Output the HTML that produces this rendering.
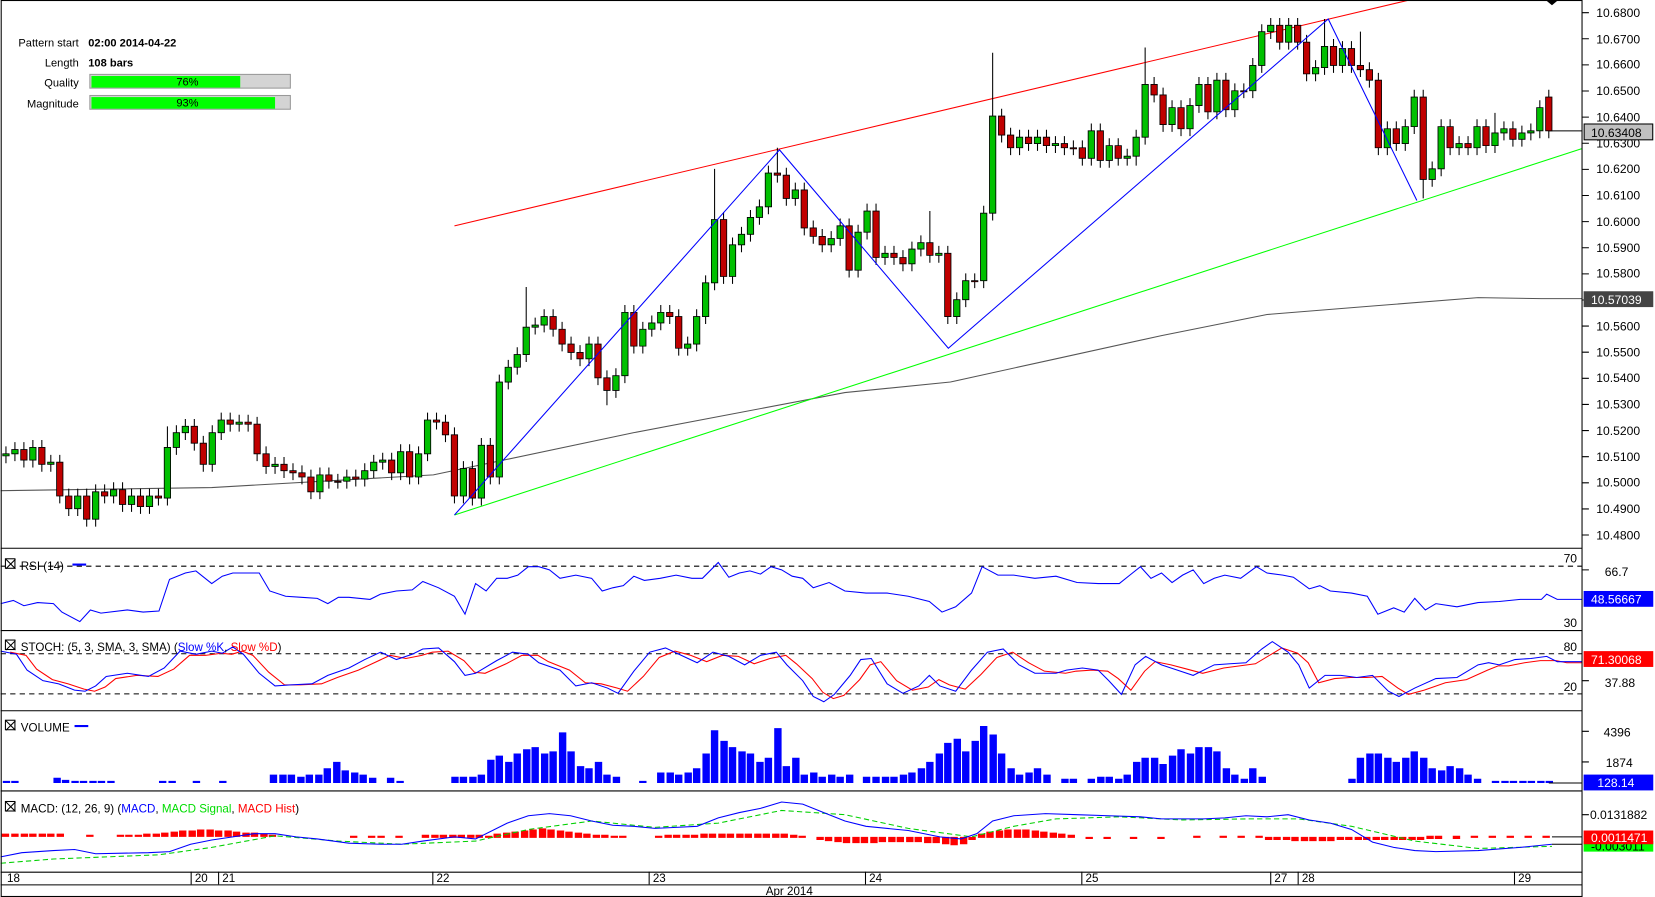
<!DOCTYPE html>
<html><head><meta charset="utf-8"><style>
html,body{margin:0;padding:0;background:#fff;overflow:hidden}
svg{display:block;font-family:"Liberation Sans",sans-serif}
</style></head><body>
<svg width="1655" height="897" viewBox="0 0 1567 850" xmlns="http://www.w3.org/2000/svg">
<rect width="1567" height="850" fill="#fff"/>
<!-- trend lines -->
<polyline points="0,465 200,462 410,450 600,410 800,372 900,362 1000,340 1100,318 1200,298 1300,290 1400,282 1460,283 1498,283" fill="none" stroke="#555"/>
<line x1="430" y1="214" x2="1335" y2="0" stroke="#f00"/>
<line x1="430" y1="488" x2="1498" y2="141" stroke="#0f0"/>
<line x1="1467" y1="124" x2="1498" y2="124" stroke="#000"/>
<!-- wicks -->
<path stroke="#000" fill="none" d="M5 423V439M13.5 419V437M22 419V443M30.5 417V443M39 417V447M47.5 431V447M56 431V477M64.5 463V489M73 463V489M81.5 463V499M90 459V499M98.5 459V477M107 457V477M115.5 457V485M124 463V485M132.5 463V487M141 463V487M149.5 463V479M158 404V479M166.5 403V431M175 397V417M183.5 397V427M192 413V447M200.5 403V447M209 391V417M217.5 391V409M226 393V409M234.5 393V409M243 395V437M251.5 423V449M260 433V449M268.5 433V453M277 439V455M285.5 441V459M294 445V473M302.5 443V473M311 443V463M319.5 449V463M328 445V463M336.5 445V461M345 439V461M353.5 431V453M362 429V445M370.5 429V455M379 421V455M387.5 421V459M396 423V459M404.5 391V437M413 391V407M421.5 393V419M430 405V477M438.5 437V477M447 437V479M455.5 415V479M464 415V459M472.5 355V459M481 341V369M489.5 329V355M498 272V343M506.5 301V317M515 293V315M523.5 293V319M532 305V333M540.5 319V341M549 327V347M557.5 319V347M566 319V365M574.5 351V384M583 349V377M591.5 289V363M600 289V335M608.5 305V335M617 299V319M625.5 289V313M634 289V307M642.5 293V337M651 319V337M659.5 293V333M668 261V307M676.5 160V275M685 201V269M693.5 225V269M702 215V239M710.5 199V229M719 189V213M727.5 157V203M736 140V173M744.5 159V195M753 173V195M761.5 173V223M770 209V231M778.5 217V239M787 219V239M795.5 207V233M804 207V263M812.5 213V263M821 193V227M829.5 193V251M838 233V251M846.5 233V251M855 237V257M863.5 229V257M872 223V243M880.5 200V249M889 233V249M897.5 233V307M906 277V307M914.5 259V291M923 259V273M931.5 195V273M940 50V209M948.5 103V135M957 121V147M965.5 123V147M974 123V143M982.5 123V143M991 123V145M999.5 129V145M1008 129V147M1016.5 133V147M1025 133V157M1033.5 117V157M1042 117V159M1050.5 131V159M1059 131V157M1067.5 141V157M1076 123V157M1084.5 45V137M1093 73V97M1101.5 83V125M1110 95V125M1118.5 95V129M1127 93V129M1135.5 73V107M1144 73V113M1152.5 69V113M1161 69V111M1169.5 79V111M1178 79V93M1186.5 55V93M1195 23V69M1203.5 17V37M1212 17V47M1220.5 17V47M1229 17V47M1237.5 33V77M1246 57V77M1254.5 18V71M1263 37V69M1271.5 39V69M1280 39V69M1288.5 30V73M1297 59V83M1305.5 69V147M1314 115V147M1322.5 115V143M1331 113V143M1339.5 85V127M1348 85V188M1356.5 153V177M1365 113V167M1373.5 113V147M1382 129V147M1390.5 129V147M1399 113V147M1407.5 113V145M1416 107V145M1424.5 115V133M1433 115V139M1441.5 119V139M1450 117V133M1458.5 95V131M1467 85V131"/>
<!-- green bodies -->
<path fill="#00c000" stroke="#000" stroke-width="0.8" d="M2 430h6v2h-6zM10.5 426h6v4h-6zM27.5 424h6v12h-6zM44.5 438h6v2h-6zM70 470h6v12h-6zM87 466h6v26h-6zM104 464h6v6h-6zM121 470h6v8h-6zM138 470h6v10h-6zM155 424h6v48h-6zM163.5 410h6v14h-6zM172 404h6v6h-6zM197.5 410h6v30h-6zM206 398h6v12h-6zM223 400h6v2h-6zM257 440h6v2h-6zM299.5 450h6v16h-6zM325 452h6v4h-6zM342 446h6v8h-6zM350.5 438h6v8h-6zM359 436h6v2h-6zM376 428h6v20h-6zM393 430h6v22h-6zM401.5 398h6v32h-6zM435.5 444h6v26h-6zM452.5 422h6v50h-6zM469.5 362h6v90h-6zM478 348h6v14h-6zM486.5 336h6v12h-6zM495 310h6v26h-6zM503.5 308h6v2h-6zM512 300h6v8h-6zM554.5 326h6v14h-6zM580 356h6v14h-6zM588.5 296h6v60h-6zM605.5 312h6v16h-6zM614 306h6v6h-6zM622.5 296h6v10h-6zM648 326h6v4h-6zM656.5 300h6v26h-6zM665 268h6v32h-6zM673.5 208h6v60h-6zM690.5 232h6v30h-6zM699 222h6v10h-6zM707.5 206h6v16h-6zM716 196h6v10h-6zM724.5 164h6v32h-6zM750 180h6v8h-6zM784 226h6v6h-6zM792.5 214h6v12h-6zM809.5 220h6v36h-6zM818 200h6v20h-6zM835 240h6v4h-6zM860.5 236h6v14h-6zM869 230h6v6h-6zM886 240h6v2h-6zM903 284h6v16h-6zM911.5 266h6v18h-6zM928.5 202h6v64h-6zM937 110h6v92h-6zM962.5 130h6v10h-6zM979.5 130h6v6h-6zM996.5 136h6v2h-6zM1030.5 124h6v26h-6zM1047.5 138h6v14h-6zM1064.5 148h6v2h-6zM1073 130h6v18h-6zM1081.5 80h6v50h-6zM1107 102h6v16h-6zM1124 100h6v22h-6zM1132.5 80h6v20h-6zM1149.5 76h6v30h-6zM1166.5 86h6v18h-6zM1183.5 62h6v24h-6zM1192 30h6v32h-6zM1200.5 24h6v6h-6zM1217.5 24h6v16h-6zM1243 64h6v6h-6zM1251.5 44h6v20h-6zM1268.5 46h6v16h-6zM1311 122h6v18h-6zM1328 120h6v16h-6zM1336.5 92h6v28h-6zM1353.5 160h6v10h-6zM1362 120h6v40h-6zM1379 136h6v4h-6zM1396 120h6v20h-6zM1413 126h6v12h-6zM1421.5 122h6v4h-6zM1438.5 126h6v6h-6zM1447 124h6v2h-6zM1455.5 102h6v22h-6z"/>
<!-- red bodies -->
<path fill="#c00000" stroke="#000" stroke-width="0.8" d="M19 426h6v10h-6zM36 424h6v16h-6zM53 438h6v32h-6zM61.5 470h6v12h-6zM78.5 470h6v22h-6zM95.5 466h6v4h-6zM112.5 464h6v14h-6zM129.5 470h6v10h-6zM146.5 470h6v2h-6zM180.5 404h6v16h-6zM189 420h6v20h-6zM214.5 398h6v4h-6zM231.5 400h6v2h-6zM240 402h6v28h-6zM248.5 430h6v12h-6zM265.5 440h6v6h-6zM274 446h6v2h-6zM282.5 448h6v4h-6zM291 452h6v14h-6zM308 450h6v6h-6zM316.5 456h6v1h-6zM333.5 452h6v2h-6zM367.5 436h6v12h-6zM384.5 428h6v24h-6zM410 398h6v2h-6zM418.5 400h6v12h-6zM427 412h6v58h-6zM444 444h6v28h-6zM461 422h6v30h-6zM520.5 300h6v12h-6zM529 312h6v14h-6zM537.5 326h6v8h-6zM546 334h6v6h-6zM563 326h6v32h-6zM571.5 358h6v12h-6zM597 296h6v32h-6zM631 296h6v4h-6zM639.5 300h6v30h-6zM682 208h6v54h-6zM733 164h6v2h-6zM741.5 166h6v22h-6zM758.5 180h6v36h-6zM767 216h6v8h-6zM775.5 224h6v8h-6zM801 214h6v42h-6zM826.5 200h6v44h-6zM843.5 240h6v4h-6zM852 244h6v6h-6zM877.5 230h6v12h-6zM894.5 240h6v60h-6zM920 266h6v1h-6zM945.5 110h6v18h-6zM954 128h6v12h-6zM971 130h6v6h-6zM988 130h6v8h-6zM1005 136h6v4h-6zM1013.5 140h6v1h-6zM1022 140h6v10h-6zM1039 124h6v28h-6zM1056 138h6v12h-6zM1090 80h6v10h-6zM1098.5 90h6v28h-6zM1115.5 102h6v20h-6zM1141 80h6v26h-6zM1158 76h6v28h-6zM1175 86h6v1h-6zM1209 24h6v16h-6zM1226 24h6v16h-6zM1234.5 40h6v30h-6zM1260 44h6v18h-6zM1277 46h6v16h-6zM1285.5 62h6v4h-6zM1294 66h6v10h-6zM1302.5 76h6v64h-6zM1319.5 122h6v14h-6zM1345 92h6v78h-6zM1370.5 120h6v20h-6zM1387.5 136h6v4h-6zM1404.5 120h6v18h-6zM1430 122h6v10h-6zM1464 92h6v32h-6z"/>
<!-- zigzag -->
<polyline points="430,488 738,142 898,330 1258,18 1342,190" fill="none" stroke="#00f"/>
<!-- indicator levels -->
<g stroke="#000" stroke-dasharray="5,4">
<line x1="0" y1="536.5" x2="1498" y2="536.5"/>
<line x1="0" y1="619.5" x2="1498" y2="619.5"/>
<line x1="0" y1="657.5" x2="1498" y2="657.5"/>
</g>
<!-- RSI -->
<polyline fill="none" stroke="#00f" points="0,572 12,569 22,574 35,571 50,572 58,580 75,589 85,578 95,581 120,578 135,580 150,579 160,549 175,543 185,541 200,553 210,546 220,543 245,543 255,560 270,565 285,566 300,567 310,572 320,566 330,566 350,568 360,563 375,560 390,559 400,551 415,557 430,565 440,582 450,553 460,560 470,548 480,548 490,545 500,537 510,537 520,540 530,548 545,545 560,548 570,560 580,557 590,555 600,546 610,550 625,548 640,545 655,548 665,548 680,533 690,547 700,543 710,541 720,544 730,537 740,540 750,546 760,548 770,557 785,552 800,560 820,562 840,562 860,565 880,570 892,580 905,575 920,562 930,537 945,545 960,545 980,548 1000,546 1020,552 1040,553 1060,553 1070,545 1080,537 1090,548 1100,543 1110,552 1120,545 1130,540 1140,553 1150,548 1160,545 1175,548 1190,537 1200,543 1215,545 1225,547 1240,558 1250,555 1260,560 1280,562 1295,565 1305,582 1320,576 1330,580 1340,567 1350,578 1360,572 1380,575 1400,571 1420,570 1440,568 1460,568 1465,563 1475,568 1498,568"/>
<!-- STOCH -->
<polyline fill="none" stroke="#f00" transform="translate(9,1)" points="0,617 15,620 25,633 40,643 55,647 70,652 80,654 90,650 100,642 120,639 140,640 155,633 170,620 185,620 200,618 210,619 220,616 230,620 245,636 260,648 275,648 295,647 310,641 330,634 345,627 360,620 375,623 390,620 400,617 415,616 430,625 440,636 450,637 470,628 485,620 500,620 510,626 530,634 545,646 560,647 575,651 585,654 600,640 615,622 630,616 645,620 660,626 675,620 690,621 705,628 720,623 735,620 745,628 760,642 770,655 780,661 790,658 805,643 815,629 825,626 840,644 855,653 870,650 880,643 890,648 905,652 920,638 935,622 950,617 965,627 980,635 1000,637 1010,635 1025,634 1040,635 1050,642 1062,653 1075,635 1085,626 1100,629 1115,633 1130,637 1150,632 1165,630 1180,628 1195,619 1205,613 1220,618 1230,627 1240,646 1255,642 1270,641 1285,641 1300,640 1315,651 1325,657 1340,653 1360,646 1380,643 1400,634 1410,630 1420,630 1435,627 1450,625 1465,625 1475,627 1489,627"/>
<polyline fill="none" stroke="#00f" points="0,617 15,620 25,635 40,645 55,648 70,654 80,655 90,650 100,641 120,638 140,641 155,633 170,617 185,620 200,617 210,619 220,613 230,620 245,638 260,650 275,649 295,648 310,640 330,633 345,625 360,618 375,625 390,620 400,615 415,614 430,627 440,640 450,638 470,626 485,618 500,620 510,628 530,635 545,650 560,647 575,652 585,657 600,636 615,618 630,614 645,621 660,628 675,618 690,622 705,630 720,621 735,618 745,630 760,645 770,660 780,665 790,658 805,640 815,625 825,624 840,648 855,657 870,650 880,640 890,650 905,655 920,635 935,618 950,615 965,630 980,638 1000,638 1010,635 1025,633 1040,635 1050,645 1062,658 1075,630 1085,622 1100,630 1115,635 1130,640 1150,630 1165,629 1180,628 1195,615 1205,608 1220,618 1230,630 1240,652 1255,640 1270,640 1285,642 1300,640 1315,655 1325,660 1340,652 1360,643 1380,642 1400,630 1410,628 1420,630 1435,625 1450,624 1465,622 1475,627 1498,627"/>
<!-- VOLUME -->
<path fill="#00f" d="M2 740h7v2h-7zM10 740h7v2h-7zM50 737h7v5h-7zM58 739h7v3h-7zM67 740h7v2h-7zM75 740h7v2h-7zM84 740h7v2h-7zM92 740h7v2h-7zM101 740h7v2h-7zM150 740h7v2h-7zM159 740h7v2h-7zM182 740h7v2h-7zM207 740h7v2h-7zM255 734h7v8h-7zM264 734h7v8h-7zM272 734h7v8h-7zM281 736h7v6h-7zM289 734h7v8h-7zM298 734h7v8h-7zM306 728h7v14h-7zM315 722h7v20h-7zM323 730h7v12h-7zM332 732h7v10h-7zM340 734h7v8h-7zM349 737h7v5h-7zM366 737h7v5h-7zM375 740h7v2h-7zM427 736h7v6h-7zM435 736h7v6h-7zM444 736h7v6h-7zM452 734h7v8h-7zM461 720h7v22h-7zM469 716h7v26h-7zM478 722h7v20h-7zM486 714h7v28h-7zM495 710h7v32h-7zM503 708h7v34h-7zM512 714h7v28h-7zM520 712h7v30h-7zM529 694h7v48h-7zM537 712h7v30h-7zM546 726h7v16h-7zM554 728h7v14h-7zM563 722h7v20h-7zM571 734h7v8h-7zM580 736h7v6h-7zM605 740h7v2h-7zM622 732h7v10h-7zM631 732h7v10h-7zM639 734h7v8h-7zM648 732h7v10h-7zM656 728h7v14h-7zM665 714h7v28h-7zM673 692h7v50h-7zM682 702h7v40h-7zM690 708h7v34h-7zM699 712h7v30h-7zM707 714h7v28h-7zM716 722h7v20h-7zM724 718h7v24h-7zM733 690h7v52h-7zM741 726h7v16h-7zM750 718h7v24h-7zM758 734h7v8h-7zM767 732h7v10h-7zM775 736h7v6h-7zM784 734h7v8h-7zM792 736h7v6h-7zM801 734h7v8h-7zM817 736h7v6h-7zM826 736h7v6h-7zM835 736h7v6h-7zM843 736h7v6h-7zM852 734h7v8h-7zM860 732h7v10h-7zM869 728h7v14h-7zM877 722h7v20h-7zM886 714h7v28h-7zM894 704h7v38h-7zM903 700h7v42h-7zM911 712h7v30h-7zM920 702h7v40h-7zM928 688h7v54h-7zM937 696h7v46h-7zM945 714h7v28h-7zM954 728h7v14h-7zM962 734h7v8h-7zM971 732h7v10h-7zM979 728h7v14h-7zM988 734h7v8h-7zM1005 738h7v4h-7zM1013 738h7v4h-7zM1030 738h7v4h-7zM1039 736h7v6h-7zM1047 736h7v6h-7zM1056 738h7v4h-7zM1064 734h7v8h-7zM1073 722h7v20h-7zM1081 718h7v24h-7zM1090 718h7v24h-7zM1098 724h7v18h-7zM1107 716h7v26h-7zM1115 710h7v32h-7zM1124 714h7v28h-7zM1132 708h7v34h-7zM1141 708h7v34h-7zM1149 712h7v30h-7zM1158 728h7v14h-7zM1166 734h7v8h-7zM1175 738h7v4h-7zM1183 728h7v14h-7zM1192 736h7v6h-7zM1277 738h7v4h-7zM1285 718h7v24h-7zM1294 714h7v28h-7zM1302 714h7v28h-7zM1311 718h7v24h-7zM1319 722h7v20h-7zM1328 718h7v24h-7zM1336 712h7v30h-7zM1345 718h7v24h-7zM1353 728h7v14h-7zM1362 730h7v12h-7zM1370 726h7v16h-7zM1379 728h7v14h-7zM1387 734h7v8h-7zM1396 738h7v4h-7zM1413 740h7v2h-7zM1422 740h7v2h-7zM1430 740h7v2h-7zM1439 740h7v2h-7zM1447 740h7v2h-7zM1456 740h7v2h-7zM1464 740h7v2h-7z"/>
<line x1="1467" y1="742" x2="1498" y2="742" stroke="#000"/>
<!-- MACD -->
<path fill="#f00" d="M1 790h7v3h-7zM10 790h7v3h-7zM19 790h7v3h-7zM27 790h7v3h-7zM36 790h7v3h-7zM44 790h7v3h-7zM53 790h7v3h-7zM81 791h7v2h-7zM110 791h7v2h-7zM118 791h7v2h-7zM127 791h7v2h-7zM135 790h7v3h-7zM144 790h7v3h-7zM152 789h7v4h-7zM161 788h7v5h-7zM169 787h7v6h-7zM178 787h7v6h-7zM186 786h7v7h-7zM195 786h7v7h-7zM203 787h7v6h-7zM212 787h7v6h-7zM220 788h7v5h-7zM229 789h7v4h-7zM237 789h7v4h-7zM246 790h7v3h-7zM254 791h7v2h-7zM331 792h7v2h-7zM348 792h7v2h-7zM357 792h7v2h-7zM374 792h7v2h-7zM399 791h7v3h-7zM408 791h7v3h-7zM416 791h7v3h-7zM425 791h7v3h-7zM433 791h7v3h-7zM442 791h7v3h-7zM450 791h7v3h-7zM459 792h7v2h-7zM467 790h7v4h-7zM476 789h7v5h-7zM484 788h7v6h-7zM493 787h7v7h-7zM501 786h7v8h-7zM510 785h7v9h-7zM518 786h7v8h-7zM527 787h7v7h-7zM535 788h7v6h-7zM544 789h7v5h-7zM552 790h7v4h-7zM561 791h7v3h-7zM569 791h7v3h-7zM578 792h7v2h-7zM586 792h7v2h-7zM620 792h7v2h-7zM629 791h7v3h-7zM637 791h7v3h-7zM646 791h7v3h-7zM654 791h7v3h-7zM663 790h7v4h-7zM671 790h7v4h-7zM680 790h7v4h-7zM688 790h7v4h-7zM697 790h7v4h-7zM705 790h7v4h-7zM714 790h7v4h-7zM722 790h7v4h-7zM731 790h7v4h-7zM739 790h7v4h-7zM748 791h7v3h-7zM756 792h7v2h-7zM773 793h7v3h-7zM781 793h7v4h-7zM790 793h7v5h-7zM798 793h7v6h-7zM807 793h7v6h-7zM815 793h7v6h-7zM824 793h7v6h-7zM832 793h7v5h-7zM841 793h7v5h-7zM849 793h7v5h-7zM858 793h7v5h-7zM866 793h7v5h-7zM875 793h7v6h-7zM883 793h7v6h-7zM892 793h7v7h-7zM900 793h7v8h-7zM909 793h7v7h-7zM917 793h7v3h-7zM926 790h7v4h-7zM934 788h7v6h-7zM943 787h7v7h-7zM951 786h7v8h-7zM960 786h7v8h-7zM968 786h7v8h-7zM977 787h7v7h-7zM985 788h7v6h-7zM994 789h7v5h-7zM1002 790h7v4h-7zM1011 791h7v3h-7zM1028 793h7v2h-7zM1045 793h7v2h-7zM1070 793h7v2h-7zM1096 793h7v2h-7zM1130 792h7v2h-7zM1155 792h7v2h-7zM1172 792h7v2h-7zM1189 792h7v2h-7zM1198 793h7v3h-7zM1206 793h7v3h-7zM1215 793h7v3h-7zM1223 793h7v4h-7zM1232 793h7v4h-7zM1240 793h7v4h-7zM1249 793h7v4h-7zM1257 793h7v4h-7zM1266 793h7v3h-7zM1274 793h7v3h-7zM1283 793h7v3h-7zM1291 793h7v3h-7zM1300 793h7v3h-7zM1308 793h7v3h-7zM1317 793h7v3h-7zM1325 793h7v3h-7zM1334 793h7v3h-7zM1342 793h7v3h-7zM1351 792h7v3h-7zM1359 792h7v3h-7zM1376 792h7v3h-7zM1393 792h7v2h-7zM1410 792h7v2h-7zM1427 792h7v2h-7zM1444 792h7v2h-7zM1461 792h7v2h-7z"/>
<polyline fill="none" stroke="#00d000" stroke-dasharray="5,3" points="0,818 50,814 100,812 150,810 200,803 260,792 320,797 380,800 450,797 500,786 560,778 620,784 680,780 740,768 800,772 860,785 920,793 960,783 1000,776 1060,774 1120,777 1180,776 1230,776 1280,783 1340,797 1400,804 1470,802"/>
<polyline fill="none" stroke="#00f" points="0,812 20,808 50,806 70,805 90,809 140,808 160,807 180,800 200,796 220,793 240,790 260,790 280,793 300,795 330,799 360,800 380,800 400,797 430,793 450,795 480,780 500,773 520,771 540,773 560,778 580,782 600,783 620,785 640,784 660,783 680,775 700,770 720,766 740,760 760,762 780,770 800,778 820,783 860,787 890,793 910,795 925,790 940,778 960,773 990,771 1020,772 1050,773 1080,774 1100,776 1140,776 1160,775 1180,773 1200,774 1220,772 1240,777 1260,780 1280,786 1300,798 1320,803 1340,806 1360,807 1400,806 1440,803 1470,800"/>
<line x1="1470" y1="793" x2="1498" y2="793" stroke="#000"/><line x1="1470" y1="800" x2="1498" y2="800" stroke="#000"/>
<!-- frames -->
<g stroke="#000" fill="none" stroke-width="1">
<rect x="0.5" y="0.5" width="1498" height="849"/>
<line x1="0" y1="519.5" x2="1498" y2="519.5"/>
<line x1="0" y1="597.5" x2="1498" y2="597.5"/>
<line x1="0" y1="673.5" x2="1498" y2="673.5"/>
<line x1="0" y1="749.5" x2="1498" y2="749.5"/>
<line x1="0" y1="826.5" x2="1498" y2="826.5"/>
<line x1="0" y1="838.5" x2="1498" y2="838.5"/>
</g>
<!-- info -->
<g font-size="10.5">
<text x="74" y="44" text-anchor="end">Pattern start</text>
<text x="83" y="44" font-weight="bold">02:00 2014-04-22</text>
<text x="74" y="63" text-anchor="end">Length</text>
<text x="83" y="63" font-weight="bold">108 bars</text>
<text x="74" y="82" text-anchor="end">Quality</text>
<text x="74" y="102" text-anchor="end">Magnitude</text>
</g>
<rect x="84.5" y="70.5" width="190" height="13" fill="#d4d4d4" stroke="#999"/>
<rect x="86" y="72" width="141" height="11" fill="#00ff00"/>
<text x="177" y="81" font-size="10.5" text-anchor="middle">76%</text>
<rect x="84.5" y="90.5" width="190" height="13" fill="#d4d4d4" stroke="#999"/>
<rect x="86" y="92" width="174" height="11" fill="#00ff00"/>
<text x="177" y="101" font-size="10.5" text-anchor="middle">93%</text>
<!-- panel titles -->
<g font-size="11">
<rect x="4.5" y="529.5" width="9" height="9" fill="#fff" stroke="#000"/><path d="M5 530l9 9M14 530l-9 9" stroke="#000"/>
<text x="19" y="540">RSI (14)</text><line x1="68" y1="535" x2="81" y2="535" stroke="#00f" stroke-width="2"/>
<rect x="4.5" y="606.5" width="9" height="9" fill="#fff" stroke="#000"/><path d="M5 607l9 9M14 607l-9 9" stroke="#000"/>
<text x="19" y="617">STOCH: (5, 3, SMA, 3, SMA) (<tspan fill="#00f">Slow %K</tspan>, <tspan fill="#f00">Slow %D</tspan>)</text>
<rect x="4.5" y="682.5" width="9" height="9" fill="#fff" stroke="#000"/><path d="M5 683l9 9M14 683l-9 9" stroke="#000"/>
<text x="19" y="693">VOLUME</text><line x1="70" y1="688" x2="83" y2="688" stroke="#00f" stroke-width="2"/>
<rect x="4.5" y="759.5" width="9" height="9" fill="#fff" stroke="#000"/><path d="M5 760l9 9M14 760l-9 9" stroke="#000"/>
<text x="19" y="770">MACD: (12, 26, 9) (<tspan fill="#00f">MACD</tspan>, <tspan fill="#0d0">MACD Signal</tspan>, <tspan fill="#f00">MACD Hist</tspan>)</text>
</g>
<!-- date axis -->
<g stroke="#000">
<line x1="180.5" y1="826" x2="180.5" y2="838"/><line x1="206.5" y1="826" x2="206.5" y2="838"/>
<line x1="409.5" y1="826" x2="409.5" y2="838"/><line x1="614.5" y1="826" x2="614.5" y2="838"/>
<line x1="819.5" y1="826" x2="819.5" y2="838"/><line x1="1024.5" y1="826" x2="1024.5" y2="838"/>
<line x1="1203.5" y1="826" x2="1203.5" y2="838"/><line x1="1229.5" y1="826" x2="1229.5" y2="838"/>
<line x1="1434.5" y1="826" x2="1434.5" y2="838"/>
</g>
<g font-size="11">
<text x="6" y="836">18</text><text x="184" y="836">20</text><text x="210" y="836">21</text>
<text x="413" y="836">22</text><text x="618" y="836">23</text><text x="823" y="836">24</text>
<text x="1028" y="836">25</text><text x="1207" y="836">27</text><text x="1233" y="836">28</text>
<text x="1438" y="836">29</text><text x="725" y="848">Apr 2014</text>
</g>
<!-- right price axis -->
<g stroke="#000">
<path d="M1498 12h7M1498 36.75h7M1498 61.5h7M1498 86.25h7M1498 111h7M1498 135.75h7M1498 160.5h7M1498 185.25h7M1498 210h7M1498 234.75h7M1498 259.5h7M1498 284.25h7M1498 309h7M1498 333.75h7M1498 358.5h7M1498 383.25h7M1498 408h7M1498 432.75h7M1498 457.5h7M1498 482.25h7M1498 507h7M1498 540h7M1498 645h7M1498 693h7M1498 722h7M1498 772h7"/>
</g>
<g font-size="11.5">
<text x="1512" y="16">10.6800</text><text x="1512" y="41">10.6700</text><text x="1512" y="65">10.6600</text>
<text x="1512" y="90">10.6500</text><text x="1512" y="115">10.6400</text><text x="1512" y="140">10.6300</text>
<text x="1512" y="164">10.6200</text><text x="1512" y="189">10.6100</text><text x="1512" y="214">10.6000</text>
<text x="1512" y="239">10.5900</text><text x="1512" y="263">10.5800</text><text x="1512" y="288">10.5700</text>
<text x="1512" y="313">10.5600</text><text x="1512" y="338">10.5500</text><text x="1512" y="362">10.5400</text>
<text x="1512" y="387">10.5300</text><text x="1512" y="412">10.5200</text><text x="1512" y="437">10.5100</text>
<text x="1512" y="461">10.5000</text><text x="1512" y="486">10.4900</text><text x="1512" y="511">10.4800</text>
<text x="1481" y="533">70</text><text x="1481" y="594">30</text><text x="1520" y="546">66.7</text>
<text x="1481" y="617">80</text><text x="1481" y="655">20</text><text x="1520" y="651">37.88</text>
<text x="1519" y="698">4396</text><text x="1521" y="727">1874</text>
<text x="1506" y="776">0.0131882</text>
<rect x="1500" y="560" width="66" height="15" fill="#00f"/><text x="1507" y="572" fill="#fff">48.56667</text>
<rect x="1500" y="617" width="66" height="15" fill="#f00"/><text x="1507" y="629" fill="#fff">71.30068</text>
<rect x="1500" y="734" width="66" height="15" fill="#00f"/><text x="1513" y="746" fill="#fff">128.14</text>
<rect x="1500" y="797" width="66" height="10" fill="#0f0"/><text x="1507" y="806" fill="#000">-0.003011</text>
<rect x="1500" y="787" width="66" height="13" fill="#f00"/><text x="1507" y="798" fill="#fff">0.0011471</text>
<rect x="1500.5" y="117.5" width="65" height="15" fill="#c0c0c0" stroke="#000"/><text x="1507" y="130">10.63408</text>
<rect x="1500" y="276" width="66" height="15" fill="#444"/><text x="1507" y="288" fill="#fff">10.57039</text>
</g>
<path d="M1464 0l6 5 6-5z" fill="#000"/>
</svg>
</body></html>
